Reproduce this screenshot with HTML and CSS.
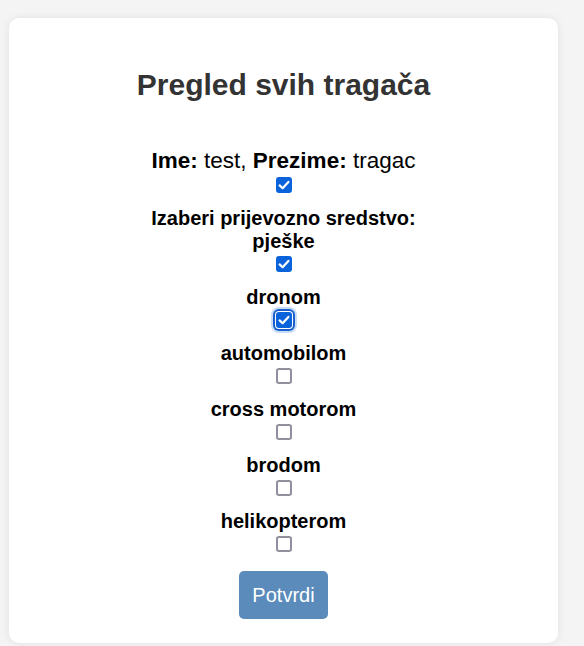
FILE: index.html
```html
<!DOCTYPE html>
<html lang="hr">
<head>
<meta charset="utf-8">
<title>Pregled svih tragača</title>
<link rel="stylesheet" href="styles.css">
</head>
<body>
<div class="card">
  <h2 class="title">Pregled svih tragača</h2>
  <form class="form">
    <div class="item">
      <div class="line big"><b>Ime:</b> test, <b>Prezime:</b> tragac</div>
      <input type="checkbox" class="cb cb-first" checked>
    </div>
    <div class="item">
      <div class="line bold">Izaberi prijevozno sredstvo:<br>pješke</div>
      <input type="checkbox" class="cb" checked>
    </div>
    <div class="item">
      <div class="line bold">dronom</div>
      <input type="checkbox" class="cb focused" checked>
    </div>
    <div class="item">
      <div class="line bold">automobilom</div>
      <input type="checkbox" class="cb">
    </div>
    <div class="item">
      <div class="line bold">cross motorom</div>
      <input type="checkbox" class="cb">
    </div>
    <div class="item">
      <div class="line bold">brodom</div>
      <input type="checkbox" class="cb">
    </div>
    <div class="item">
      <div class="line bold">helikopterom</div>
      <input type="checkbox" class="cb">
    </div>
    <button type="button" class="btn">Potvrdi</button>
  </form>
</div>
</body>
</html>
```
FILE: styles.css
```css
html, body {
  margin: 0;
  padding: 0;
}
body {
  background: #f4f4f4;
  font-family: "Liberation Sans", Arial, sans-serif;
  padding: 18px 26px 0 9px;
  height: 646px;
  box-sizing: border-box;
  overflow: hidden;
}
.card {
  background: #fff;
  border-radius: 10px;
  box-shadow: 0 0 8px rgba(0,0,0,0.08);
  padding: 50px 20px 24px;
  display: flex;
  flex-direction: column;
  align-items: center;
}
.title {
  margin: 0;
  font-size: 30px;
  font-weight: bold;
  color: #333;
  line-height: 34px;
  text-align: center;
}
.form {
  margin-top: 43px;
  display: flex;
  flex-direction: column;
  align-items: center;
}
.item {
  display: flex;
  flex-direction: column;
  align-items: center;
  margin-bottom: 12px;
}
.line {
  font-size: 20px;
  line-height: 23px;
  padding-top: 2px;
  color: #000;
  text-align: center;
}
.line.big {
  font-size: 22.5px;
  line-height: 26px;
  padding-top: 3px;
}
.line b, .bold {
  font-weight: bold;
}
.cb {
  -webkit-appearance: none;
  appearance: none;
  width: 16px;
  height: 16px;
  margin: 3px 0 0 1px;
  border: 2px solid #8f8f9d;
  border-radius: 3px;
  background: #fff;
  box-sizing: border-box;
}
.cb.cb-first {
  margin-top: 3px;
}
.cb:checked {
  border: none;
  background: #0b63db url("data:image/svg+xml;utf8,<svg xmlns='http://www.w3.org/2000/svg' viewBox='0 0 16 16'><path d='M3.6 8.4 L6.6 11.2 L12.4 4.9' fill='none' stroke='white' stroke-width='2.2' stroke-linecap='round' stroke-linejoin='round'/></svg>") center/16px 16px no-repeat;
}
.cb.focused {
  box-shadow: 0 0 0 1px #fff, 0 0 0 3px #1a5fcc, 0 0 0 5px #c9dcf7;
}
.btn {
  margin-top: 7px;
  background: #5a8bba;
  color: #fff;
  border: none;
  border-radius: 5px;
  font-family: "Liberation Sans", Arial, sans-serif;
  font-size: 20px;
  line-height: 23px;
  padding: 12.5px 13px;
}
```
